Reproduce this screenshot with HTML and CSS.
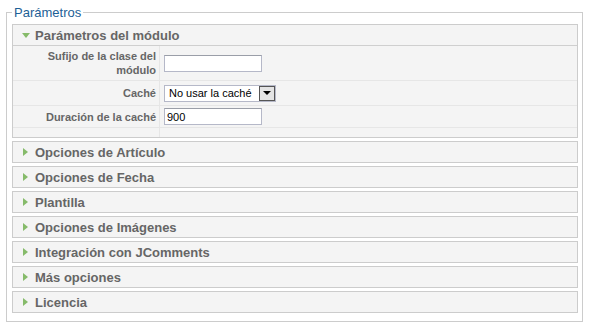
FILE: index.html
```html
<!DOCTYPE html>
<html lang="es">
<head>
    <meta charset="UTF-8">
    <meta name="viewport" content="width=device-width, initial-scale=1.0">
    <title>Parámetros</title>
    <link rel="stylesheet" href="styles.css">
</head>
<body>
    <fieldset class="params">
        <legend>Parámetros</legend>

        <div class="panel open">
            <h3 class="toggler"><span class="arrow"></span>Parámetros del módulo</h3>
            <div class="content">
                <div class="row row-tall">
                    <div class="key">Sufijo de la clase del<br>módulo</div>
                    <div class="value"><input type="text" class="text"></div>
                </div>
                <div class="row row-mid">
                    <div class="key">Caché</div>
                    <div class="value">
                        <div class="select">
                            <span class="select-text">No usar la caché</span>
                            <span class="select-btn"></span>
                        </div>
                    </div>
                </div>
                <div class="row row-short">
                    <div class="key">Duración de la caché</div>
                    <div class="value"><input type="text" class="text" value="900"></div>
                </div>
                <div class="row row-empty">
                    <div class="key"></div>
                    <div class="value"></div>
                </div>
            </div>
        </div>

        <div class="panel"><h3 class="toggler"><span class="arrow"></span>Opciones de Artículo</h3></div>
        <div class="panel"><h3 class="toggler"><span class="arrow"></span>Opciones de Fecha</h3></div>
        <div class="panel"><h3 class="toggler"><span class="arrow"></span>Plantilla</h3></div>
        <div class="panel"><h3 class="toggler"><span class="arrow"></span>Opciones de Imágenes</h3></div>
        <div class="panel"><h3 class="toggler"><span class="arrow"></span>Integración con JComments</h3></div>
        <div class="panel"><h3 class="toggler"><span class="arrow"></span>Más opciones</h3></div>
        <div class="panel"><h3 class="toggler"><span class="arrow"></span>Licencia</h3></div>
    </fieldset>
</body>
</html>
```

FILE: styles.css
```css
body {
    margin: 0;
    background: #fff;
    font-family: "Liberation Sans", Arial, sans-serif;
}

.params {
    margin: 5px 8px 0 6px;
    padding: 4px 4px 8px 5px;
    border: 1px solid #ccc;
}

.params legend {
    color: #1d5f96;
    font-size: 13px;
    line-height: 15px;
    padding: 0 2px;
}

.panel {
    border: 1px solid #ccc;
    margin-bottom: 3px;
    background: #f4f4f4;
}

.panel:last-child {
    margin-bottom: 0;
}

.toggler {
    margin: 0;
    height: 20px;
    display: flex;
    align-items: center;
    padding-left: 8px;
    font-size: 13px;
    font-weight: bold;
    color: #666;
    background: #f4f4f4;
}

.toggler .arrow {
    width: 0;
    height: 0;
    border-top: 4px solid transparent;
    border-bottom: 4px solid transparent;
    border-left: 5px solid #86bb6a;
    margin: 0 7px 0 2px;
}

.open .toggler {
    border-bottom: 1px solid #cfcfcf;
}

.open .toggler .arrow {
    border-left: 4px solid transparent;
    border-right: 4px solid transparent;
    border-top: 5px solid #86bb6a;
    border-bottom: 0;
    margin: 1px 5px 0 1px;
}

.content {
    background: #f4f4f4;
}

.row {
    display: grid;
    grid-template-columns: 147px 1fr;
    border-bottom: 1px solid #e6e6e6;
}

.row-tall { height: 34px; }
.row-mid { height: 24px; }
.row-short { height: 21px; }
.row-empty { height: 9px; border-bottom: 0; }

.key {
    display: flex;
    align-items: center;
    justify-content: flex-end;
    text-align: right;
    padding-right: 3px;
    border-right: 1px solid #e6e6e6;
    font-size: 11px;
    line-height: 14px;
    font-weight: bold;
    color: #666;
}

.value {
    display: flex;
    align-items: center;
    padding-left: 4px;
}

.text {
    box-sizing: border-box;
    width: 98px;
    height: 17px;
    margin: 0;
    padding: 0 2px;
    border: 1px solid #b5b8c8;
    border-top-color: #9a9ea8;
    background: #fff;
    font-family: "Liberation Sans", Arial, sans-serif;
    font-size: 11px;
    color: #000;
}

.select {
    box-sizing: border-box;
    width: 112px;
    height: 17px;
    display: flex;
    align-items: center;
    justify-content: space-between;
    border: 1px solid #b5b8c8;
    background: #fff;
    font-size: 11px;
    color: #000;
}

.select-text {
    padding-left: 4px;
}

.select-btn {
    box-sizing: border-box;
    width: 16px;
    height: 15px;
    border: 1px solid #555;
    background: #e4e4e4;
    display: flex;
    align-items: center;
    justify-content: center;
}

.select-btn::after {
    content: "";
    width: 0;
    height: 0;
    border-left: 4px solid transparent;
    border-right: 4px solid transparent;
    border-top: 4px solid #000;
}
```
